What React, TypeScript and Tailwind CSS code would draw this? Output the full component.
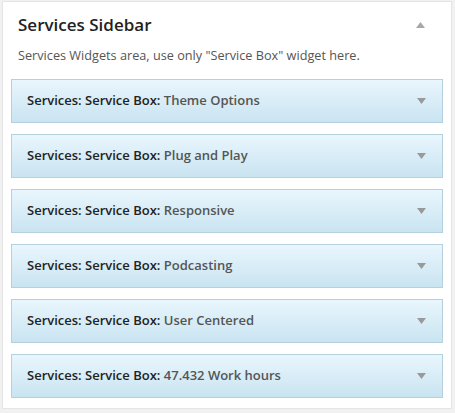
const widgets = [
  'Theme Options',
  'Plug and Play',
  'Responsive',
  'Podcasting',
  'User Centered',
  '47.432 Work hours',
];

function Arrow({ up }: { up?: boolean }) {
  return (
    <svg width="9" height="6" viewBox="0 0 9 6" className="block">
      {up ? <path d="M4.5 0 L9 6 L0 6 Z" fill="#a8a8a8" /> : <path d="M0 0 L9 0 L4.5 6 Z" fill="#999" />}
    </svg>
  );
}

export default function App() {
  return (
    <div className="w-[455px] h-[413px] bg-[#f1f1f1] pt-px pl-[2px]" style={{ fontFamily: '"Open Sans", sans-serif' }}>
      <div className="w-[450px] h-[408px] bg-white border border-[#e5e5e5] px-2">
        <div className="flex items-center justify-between pl-[7px] pr-[18px] pt-[10px]">
          <h2 className="text-[17px] font-semibold text-[#222] leading-[26px]">Services Sidebar</h2>
          <Arrow up />
        </div>
        <p className="pl-[7px] mt-[7px] text-[12.7px] text-[#555] leading-[20px]">
          Services Widgets area, use only "Service Box" widget here.
        </p>
        <div className="mt-[14px] flex flex-col gap-[11px]">
          {widgets.map((w) => (
            <div
              key={w}
              className="h-[44px] flex items-center justify-between border border-[#b6d1de] bg-gradient-to-b from-[#e9f6fd] to-[#c9e4f1] pl-[15px] pr-[16px]"
            >
              <span className="text-[13px] font-semibold text-[#222]">
                Services: Service Box: <span className="text-[#555]">{w}</span>
              </span>
              <Arrow />
            </div>
          ))}
        </div>
      </div>
    </div>
  );
}
